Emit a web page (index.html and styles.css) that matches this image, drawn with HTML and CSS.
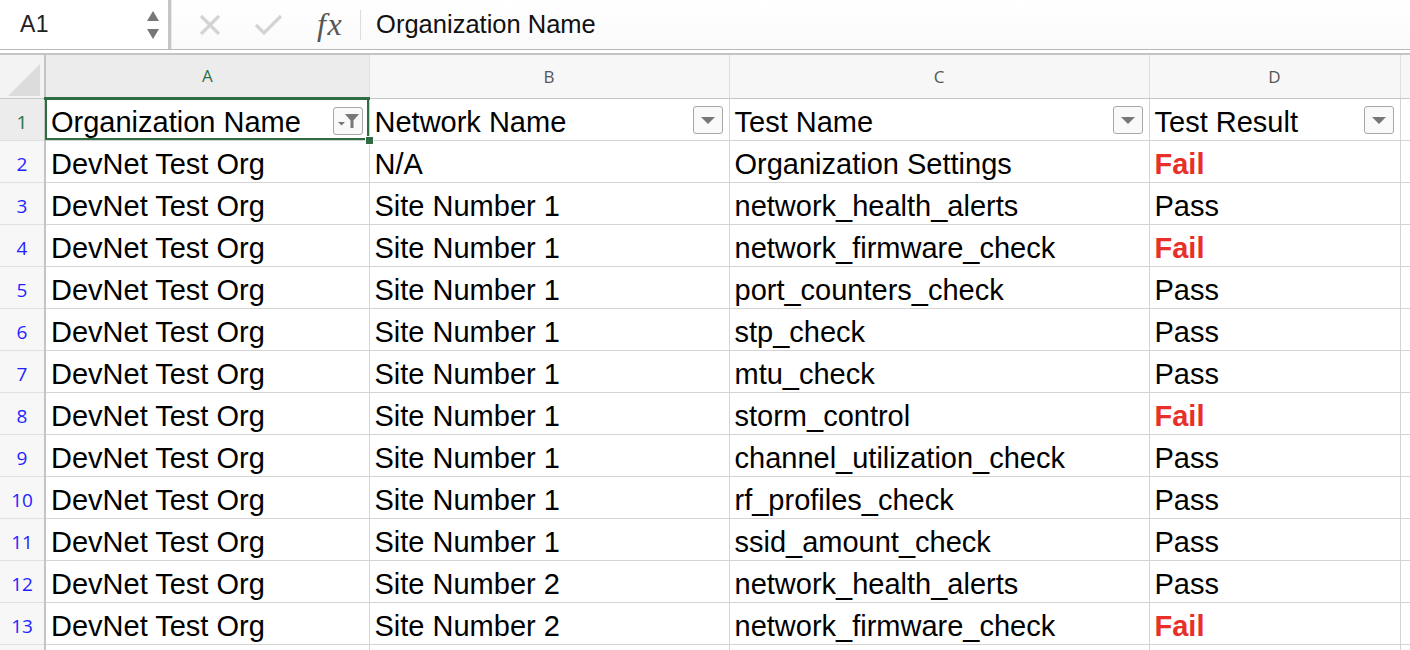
FILE: index.html
```html
<!DOCTYPE html>
<html>
<head>
<meta charset="utf-8">
<link rel="stylesheet" href="styles.css">
</head>
<body>
<div class="fbar">
  <div class="namebox">
    <span class="ref">A1</span>
    <span class="spin">
      <svg width="14" height="34" viewBox="0 0 14 34"><path d="M1 13 L7 3 L13 13 Z" fill="#777"/><path d="M1 21 L7 31 L13 21 Z" fill="#777"/></svg>
    </span>
  </div>
  <div class="sep"></div>
  <div class="tools">
    <svg class="ic" width="24" height="24" viewBox="0 0 24 24"><path d="M3 3 L21 21 M21 3 L3 21" stroke="#d4d4d4" stroke-width="3.2" fill="none"/></svg>
    <svg class="ic" width="30" height="24" viewBox="0 0 30 24"><path d="M2 12 L10 20 L27 3" stroke="#d4d4d4" stroke-width="3.2" fill="none"/></svg>
    <span class="fx">fx</span>
    <div class="fsep"></div>
  </div>
  <div class="formula">Organization Name</div>
</div>
<div class="gap"></div>
<table class="sheet">
  <colgroup>
    <col class="c0"><col class="ca"><col class="cb"><col class="cc"><col class="cd"><col class="ce">
  </colgroup>
  <thead>
    <tr class="hdr">
      <th class="corner"><svg width="40" height="40" viewBox="0 0 40 40"><path d="M38 6 L38 38 L6 38 Z" fill="#dcdcdc"/></svg></th>
      <th class="sel">A</th><th>B</th><th>C</th><th>D</th><th class="ehdr"></th>
    </tr>
  </thead>
  <tbody>
    <tr>
      <td class="rn rsel">1</td>
      <td class="active">Organization Name<span class="fb"><svg width="28" height="26" viewBox="0 0 28 26"><path d="M4 14 L11 14 L7.5 17.5 Z" fill="#777"/><path d="M11 6 L25 6 L19.5 12.5 L19.5 20 L16.5 20 L16.5 12.5 Z" fill="#777"/></svg></span><span class="handle"></span></td>
      <td>Network Name<span class="fb"><svg width="28" height="26" viewBox="0 0 28 26"><path d="M7 10 L21 10 L14 17 Z" fill="#777"/></svg></span></td>
      <td>Test Name<span class="fb"><svg width="28" height="26" viewBox="0 0 28 26"><path d="M7 10 L21 10 L14 17 Z" fill="#777"/></svg></span></td>
      <td>Test Result<span class="fb"><svg width="28" height="26" viewBox="0 0 28 26"><path d="M7 10 L21 10 L14 17 Z" fill="#777"/></svg></span></td>
      <td></td>
    </tr>
    <tr><td class="rn">2</td><td>DevNet Test Org</td><td>N/A</td><td>Organization Settings</td><td class="fail">Fail</td><td></td></tr>
    <tr><td class="rn">3</td><td>DevNet Test Org</td><td>Site Number 1</td><td>network_health_alerts</td><td>Pass</td><td></td></tr>
    <tr><td class="rn">4</td><td>DevNet Test Org</td><td>Site Number 1</td><td>network_firmware_check</td><td class="fail">Fail</td><td></td></tr>
    <tr><td class="rn">5</td><td>DevNet Test Org</td><td>Site Number 1</td><td>port_counters_check</td><td>Pass</td><td></td></tr>
    <tr><td class="rn">6</td><td>DevNet Test Org</td><td>Site Number 1</td><td>stp_check</td><td>Pass</td><td></td></tr>
    <tr><td class="rn">7</td><td>DevNet Test Org</td><td>Site Number 1</td><td>mtu_check</td><td>Pass</td><td></td></tr>
    <tr><td class="rn">8</td><td>DevNet Test Org</td><td>Site Number 1</td><td>storm_control</td><td class="fail">Fail</td><td></td></tr>
    <tr><td class="rn">9</td><td>DevNet Test Org</td><td>Site Number 1</td><td>channel_utilization_check</td><td>Pass</td><td></td></tr>
    <tr><td class="rn">10</td><td>DevNet Test Org</td><td>Site Number 1</td><td>rf_profiles_check</td><td>Pass</td><td></td></tr>
    <tr><td class="rn">11</td><td>DevNet Test Org</td><td>Site Number 1</td><td>ssid_amount_check</td><td>Pass</td><td></td></tr>
    <tr><td class="rn">12</td><td>DevNet Test Org</td><td>Site Number 2</td><td>network_health_alerts</td><td>Pass</td><td></td></tr>
    <tr><td class="rn">13</td><td>DevNet Test Org</td><td>Site Number 2</td><td>network_firmware_check</td><td class="fail">Fail</td><td></td></tr>
    <tr class="last"><td class="rn"></td><td></td><td></td><td></td><td></td><td></td></tr>
  </tbody>
</table>
</body>
</html>
```
FILE: styles.css
```css
html, body {
  margin: 0;
  padding: 0;
  background: #fff;
  overflow: hidden;
  width: 1410px;
  height: 650px;
}
body {
  font-family: "Liberation Sans", Arial, sans-serif;
}
.fbar {
  height: 49px;
  display: flex;
  align-items: center;
  background: linear-gradient(#fff, #fafafa);
  border-bottom: 1px solid #b8b8b8;
}
.namebox {
  width: 168px;
  height: 49px;
  display: flex;
  align-items: center;
  justify-content: space-between;
  box-sizing: border-box;
  padding: 0 8px 0 20px;
  background: #fff;
}
.ref {
  font-size: 23px;
  color: #222;
  letter-spacing: 0.5px;
}
.spin {
  display: flex;
}
.sep {
  width: 3px;
  height: 49px;
  background: #c6c6c6;
  border-right: 1px solid #e8e8e8;
}
.tools {
  display: flex;
  align-items: center;
  height: 49px;
  padding-left: 26px;
}
.ic {
  margin-right: 32px;
}
.tools .ic + .ic {
  margin-right: 33px;
}
.fx {
  font-family: "Liberation Serif", "DejaVu Serif", serif;
  font-style: italic;
  font-size: 32px;
  color: #555;
  margin-right: 17px;
  letter-spacing: 1.5px;
}
.fsep {
  width: 1px;
  height: 30px;
  background: #dcdcdc;
}
.formula {
  font-family: "Liberation Sans", Arial, sans-serif;
  font-size: 25.5px;
  color: #111;
  padding-left: 15px;
}
.gap {
  height: 3px;
  background: #fff;
  border-bottom: 2px solid #c4c4c4;
}
.sheet {
  border-collapse: collapse;
  table-layout: fixed;
  width: 1420px;
}
.c0 { width: 45px; }
.ca { width: 324px; }
.cb { width: 360px; }
.cc { width: 420px; }
.cd { width: 251px; }
.ce { width: 20px; }
.hdr th {
  height: 43px;
  box-sizing: border-box;
  padding: 0;
  background: #f7f7f7;
  border-right: 1px solid #e0e0e0;
  border-bottom: 1px solid #c8c8c8;
  font-family: "Open Sans", sans-serif;
  font-weight: normal;
  font-size: 17px;
  color: #555;
  vertical-align: middle;
}
.hdr th.corner {
  background: #f3f3f3;
  border-right: 2px solid #c4c4c4;
  text-align: right;
  padding: 2px 2px 0 0;
  vertical-align: bottom;
}
.corner svg { display: block; margin-left: auto; }
.hdr th.sel {
  background: #ececec;
  color: #2e7044;
  border-bottom: 3px solid #2e6d42;
}
.hdr th.ehdr { border-right: none; }
tbody td {
  height: 42px;
  box-sizing: border-box;
  padding: 5px 0 0 5px;
  border-right: 1px solid #d4d4d4;
  border-bottom: 1px solid #d4d4d4;
  font-family: "Liberation Sans", Arial, sans-serif;
  font-size: 29px;
  color: #000;
  white-space: nowrap;
  overflow: visible;
  position: relative;
  vertical-align: middle;
  line-height: 34px;
}
tbody tr.last td {
  height: 8px;
}
tbody td.rn {
  padding: 6px 0 0 0;
  text-align: center;
  font-family: "Open Sans", sans-serif;
  font-size: 19px;
  color: #1f1fff;
  background: #f7f7f7;
  border-right: 2px solid #c4c4c4;
  border-bottom: 1px solid #e0e0e0;
}
tbody td.rsel {
  color: #2e7044;
  background: #ececec;
}
td.fail {
  color: #e8302a;
  font-weight: bold;
}
td.active {
  outline: 2px solid #2e6d42;
  outline-offset: -2px;
}
.fb {
  position: absolute;
  right: 6px;
  top: 7px;
  width: 28px;
  height: 26px;
  border: 1px solid #a8a8a8;
  border-radius: 3px;
  background: #f9f9f9;
  display: flex;
}
.handle {
  position: absolute;
  right: -5px;
  bottom: -5px;
  width: 7px;
  height: 7px;
  background: #2e6d42;
  border: 1px solid #fff;
}
```
